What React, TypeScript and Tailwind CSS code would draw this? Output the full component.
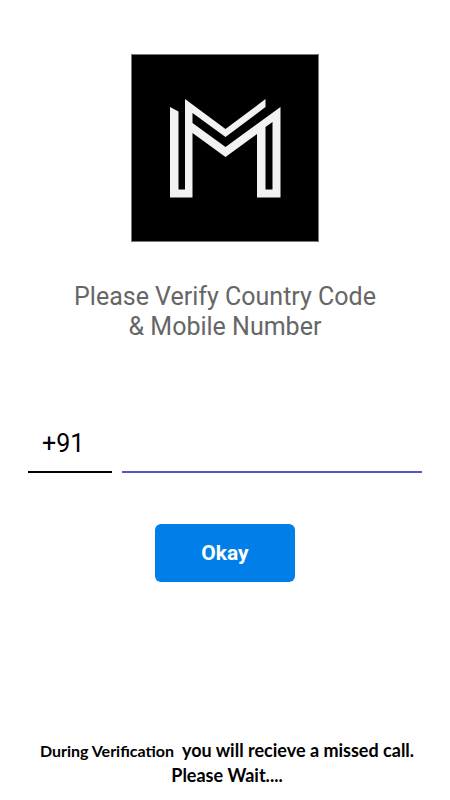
import { useState } from 'react';

function Logo() {
  return (
    <svg viewBox="0 0 188 188" className="w-47 h-47 bg-black" role="img" aria-label="M logo">
      <rect x="0.5" y="0.5" width="187" height="187" fill="#000" stroke="#777" />
      <path
        fill="#f3f2f1"
        fillRule="evenodd"
        d="M39 53L47.5 57.5V135.5H54V45L94.5 75L134.5 45V53L94.5 83L61.5 59V69L94.5 93L149.5 53V143.5H126V80L94.5 103L61.5 79V143.5H39ZM134.5 73V135.5H141.5V68Z"
      />
    </svg>
  );
}

function App() {
  const [code, setCode] = useState('+91');
  const [mobile, setMobile] = useState('');

  return (
    <main className="min-h-screen bg-white flex flex-col items-center px-7 pt-[54px] font-['Roboto','Liberation_Sans',sans-serif]">
      <Logo />

      <h1 className="mt-10 text-[25px] leading-[30px] text-center text-[#666]">
        Please Verify Country Code
        <br />
        &amp; Mobile Number
      </h1>

      <form className="w-full mt-[75px] flex flex-col items-center" onSubmit={(e) => e.preventDefault()}>
        <div className="w-full flex gap-2.5">
          <input
            type="text"
            aria-label="Country code"
            value={code}
            onChange={(e) => setCode(e.target.value)}
            className="w-21 h-14 pl-3.5 pb-0.5 text-[25px] text-black border-b-2 border-black outline-none"
          />
          <input
            type="tel"
            aria-label="Mobile number"
            value={mobile}
            onChange={(e) => setMobile(e.target.value)}
            className="flex-1 min-w-0 h-14 px-2 pb-0.5 text-[25px] text-black border-b-2 border-[#5753c9] outline-none"
          />
        </div>
        <button type="submit" className="mt-[51px] w-35 h-[58px] pt-0.5 rounded-md bg-[#007fe8] text-white text-[21px] font-bold">
          Okay
        </button>
      </form>

      <p className="mt-auto pb-3 pl-1 text-center text-lg leading-[25px] font-bold text-black font-['Lato',sans-serif]">
        <span className="mr-1 text-base">During Verification</span> you will recieve a missed call.
        <br />
        Please Wait....
      </p>
    </main>
  );
}

export default App;
